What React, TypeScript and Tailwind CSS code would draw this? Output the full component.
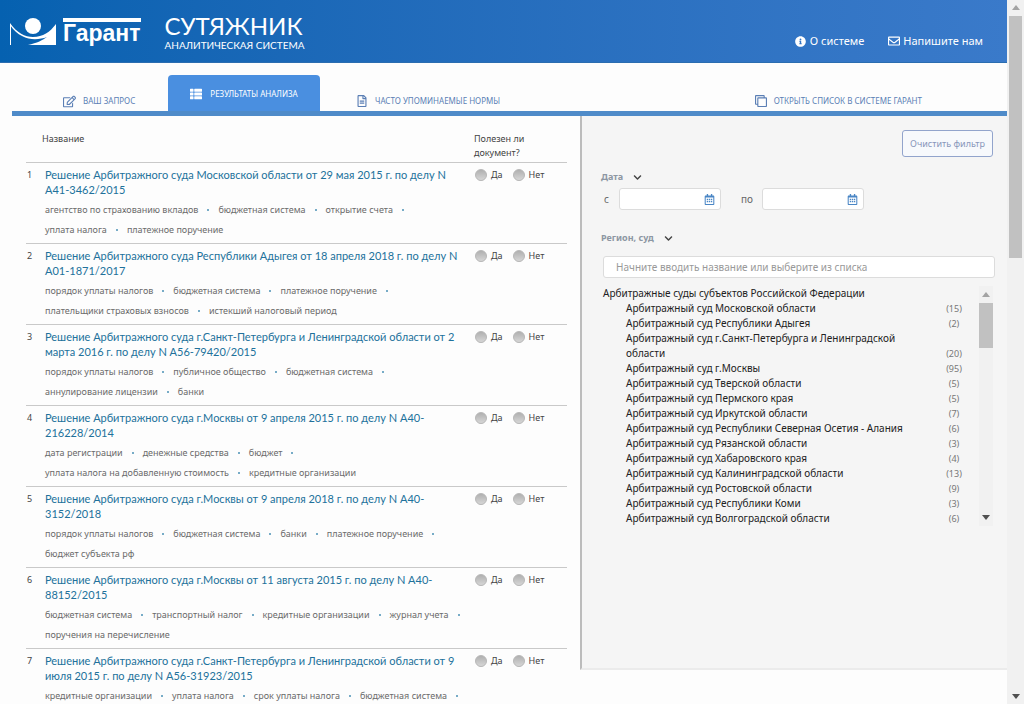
import {
  FaChevronDown,
  FaInfoCircle,
  FaRegCalendarAlt,
  FaRegClone,
  FaRegEdit,
  FaRegEnvelope,
  FaRegFileAlt,
  FaThList,
} from 'react-icons/fa'

type Decision = { title: [string, string]; tags: [string[], string[]] }

const decisions: Decision[] = [
  {
    title: ['Решение Арбитражного суда Московской области от 29 мая 2015 г. по делу N', 'А41-3462/2015'],
    tags: [
      ['агентство по страхованию вкладов', 'бюджетная система', 'открытие счета'],
      ['уплата налога', 'платежное поручение'],
    ],
  },
  {
    title: ['Решение Арбитражного суда Республики Адыгея от 18 апреля 2018 г. по делу N', 'А01-1871/2017'],
    tags: [
      ['порядок уплаты налогов', 'бюджетная система', 'платежное поручение'],
      ['плательщики страховых взносов', 'истекший налоговый период'],
    ],
  },
  {
    title: ['Решение Арбитражного суда г.Санкт-Петербурга и Ленинградской области от 2', 'марта 2016 г. по делу N А56-79420/2015'],
    tags: [
      ['порядок уплаты налогов', 'публичное общество', 'бюджетная система'],
      ['аннулирование лицензии', 'банки'],
    ],
  },
  {
    title: ['Решение Арбитражного суда г.Москвы от 9 апреля 2015 г. по делу N А40-', '216228/2014'],
    tags: [
      ['дата регистрации', 'денежные средства', 'бюджет'],
      ['уплата налога на добавленную стоимость', 'кредитные организации'],
    ],
  },
  {
    title: ['Решение Арбитражного суда г.Москвы от 9 апреля 2018 г. по делу N А40-', '3152/2018'],
    tags: [
      ['порядок уплаты налогов', 'бюджетная система', 'банки', 'платежное поручение'],
      ['бюджет субъекта рф'],
    ],
  },
  {
    title: ['Решение Арбитражного суда г.Москвы от 11 августа 2015 г. по делу N А40-', '88152/2015'],
    tags: [
      ['бюджетная система', 'транспортный налог', 'кредитные организации', 'журнал учета'],
      ['поручения на перечисление'],
    ],
  },
  {
    title: ['Решение Арбитражного суда г.Санкт-Петербурга и Ленинградской области от 9', 'июля 2015 г. по делу N А56-31923/2015'],
    tags: [['кредитные организации', 'уплата налога', 'срок уплаты налога', 'бюджетная система'], []],
  },
]

const courts: [string, number][] = [
  ['Московской области', 15],
  ['Республики Адыгея', 2],
  ['г.Санкт-Петербурга и Ленинградской области', 20],
  ['г.Москвы', 95],
  ['Тверской области', 5],
  ['Пермского края', 5],
  ['Иркутской области', 7],
  ['Республики Северная Осетия - Алания', 6],
  ['Рязанской области', 3],
  ['Хабаровского края', 4],
  ['Калининградской области', 13],
  ['Ростовской области', 9],
  ['Республики Коми', 3],
  ['Волгоградской области', 6],
]

function Arrow({ down, className }: { down?: boolean; className: string }) {
  return (
    <svg viewBox="0 0 8 5" className={`w-2 h-[5px] shrink-0 ${className}`} fill="currentColor" aria-hidden="true">
      <path d={down ? 'M0 0h8L4 5z' : 'M0 5h8L4 0z'} />
    </svg>
  )
}

function GarantMark() {
  return (
    <svg viewBox="0 0 48 30" className="w-12 h-[30px]" fill="#fff" aria-hidden="true">
      <circle cx="24" cy="10" r="8" />
      <path d="M1.5 29V8" stroke="#fff" strokeWidth="1" />
      <path d="M1 7c7 10 15 14 23 14 10 0 17-5 23-13v21H19c9-2 15-5 19-8C27 25 12 25 1 9z" />
    </svg>
  )
}

function Header() {
  return (
    <header className="flex items-center h-[63px] pl-[9px] pr-6 text-white bg-linear-to-r from-[#0561b0] to-[#3a7aca] border-b border-[#2b6db0]">
      <a href="#" className="flex items-center gap-[6px]" aria-label="Гарант">
        <GarantMark />
        <span className="border-t-4 border-white font-['Liberation_Sans'] text-[23px] leading-[22px] font-bold">
          Гарант
        </span>
      </a>
      <div className="ml-6 font-[Lato]">
        <div className="text-[24px] leading-[27px]">СУТЯЖНИК</div>
        <div className="text-[10px] leading-3">АНАЛИТИЧЕСКАЯ СИСТЕМА</div>
      </div>
      <div className="ml-auto mt-5 flex gap-6 text-[11px] leading-4">
        <a href="#" className="flex items-center gap-1">
          <FaInfoCircle />О системе
        </a>
        <a href="#" className="flex items-center gap-[3px]">
          <FaRegEnvelope className="size-3" />
          Напишите нам
        </a>
      </div>
    </header>
  )
}

function Tabs() {
  return (
    <nav className="ml-3 mt-3 flex items-stretch h-[41px] border-b-[5px] border-[#4f8bc9] text-[8px] text-[#5b7fb5]">
      <a href="#" className="flex items-center gap-[7px] w-[156px] pl-[51px] pt-4">
        <FaRegEdit className="size-[13px]" />
        ВАШ ЗАПРОС
      </a>
      <a href="#" className="flex items-center justify-center gap-2 w-[152px] pt-[2px] rounded-t bg-[#4a8fe0] text-white">
        <FaThList className="size-3" />
        РЕЗУЛЬТАТЫ АНАЛИЗА
      </a>
      <a href="#" className="flex items-center gap-[7px] pl-9 pt-4">
        <FaRegFileAlt className="size-3" />
        ЧАСТО УПОМИНАЕМЫЕ НОРМЫ
      </a>
      <a href="#" className="flex items-center gap-[7px] ml-auto pr-[85px] pt-4">
        <FaRegClone className="size-3 -scale-y-100" />
        ОТКРЫТЬ СПИСОК В СИСТЕМЕ ГАРАНТ
      </a>
    </nav>
  )
}

function Vote({ name, label }: { name: string; label: string }) {
  return (
    <label className="flex items-center gap-1">
      <input
        type="radio"
        name={name}
        className="appearance-none size-3 rounded-full bg-linear-to-b from-[#b0b0b0] to-[#d6d6d6] border border-[#b8b8b8]"
      />
      {label}
    </label>
  )
}

function TagLine({ tags, more }: { tags: string[]; more: boolean }) {
  return (
    <div className="flex whitespace-nowrap">
      {tags.map((tag, i) => (
        <span key={tag} className="flex items-center">
          {tag}
          {(more || i < tags.length - 1) && <span className="mx-[9px] size-[2px] rounded-full bg-[#4a90b5]" />}
        </span>
      ))}
    </div>
  )
}

function Results() {
  return (
    <main className="pl-[14px] pr-[13px]">
      <table className="w-full table-fixed border-collapse text-left text-[9px]">
        <colgroup>
          <col className="w-[18px]" />
          <col />
          <col className="w-[93px]" />
        </colgroup>
        <thead className="text-[#444]">
          <tr className="border-b border-[#c9c9c9] align-top leading-[14px]">
            <th colSpan={2} className="pt-4 pl-4 font-normal">Название</th>
            <th className="pt-4 pb-[2px] font-normal">
              Полезен ли
              <br />
              документ?
            </th>
          </tr>
        </thead>
        <tbody>
          {decisions.map((d, i) => (
            <tr key={i} className="border-b border-[#c9c9c9] align-top">
              <td className="pt-1 pl-px leading-[15px] text-[#444]">{i + 1}</td>
              <td className="pt-1 pb-[3px] pl-px">
                <a href="#" className="block whitespace-nowrap font-[Lato] text-[11px] leading-[15px] text-[#21719b]">
                  {d.title[0]}
                  <br />
                  {d.title[1]}
                </a>
                <div className="mt-[3px] leading-5 text-[#6b6b6b]">
                  <TagLine tags={d.tags[0]} more />
                  <TagLine tags={d.tags[1]} more={false} />
                </div>
              </td>
              <td className="pt-1 pl-px">
                <div className="flex gap-[10px] leading-[15px] text-[#444]">
                  <Vote name={`vote-${i}`} label="Да" />
                  <Vote name={`vote-${i}`} label="Нет" />
                </div>
              </td>
            </tr>
          ))}
        </tbody>
      </table>
    </main>
  )
}

function DateField({ label }: { label: string }) {
  return (
    <label className="flex items-center justify-between">
      {label}
      <span className="flex items-center w-[102px] h-[22px] pr-[5px] rounded-[3px] border border-[#dcdcdc] bg-white">
        <input type="text" className="min-w-0 flex-1 px-2 outline-none" />
        <FaRegCalendarAlt className="size-[11px] text-[#4a86c5]" />
      </span>
    </label>
  )
}

function Filter() {
  return (
    <aside className="flex flex-col self-start h-[554px] pl-[19px] pr-3 text-[10px] bg-[#f5f5f5] border-l-2 border-l-[#bcbcbc] border-b-2 border-b-[#ebebeb]">
      <button className="self-end mt-[14px] mr-[2px] w-[91px] h-[27px] rounded-[3px] border border-[#92a4cc] bg-[#f7f9fc] text-[9px] text-[#8796ba]">
        Очистить фильтр
      </button>
      <button className="mt-[12px] flex items-center gap-[10px] self-start text-[9px] leading-4 font-bold text-[#8d97a3]">
        Дата <FaChevronDown className="text-[#444]" />
      </button>
      <div className="mt-[3px] pl-[3px] flex gap-5 text-[#666]">
        <span className="w-[117px]"><DateField label="с" /></span>
        <span className="w-[123px]"><DateField label="по" /></span>
      </div>
      <button className="mt-5 flex items-center gap-[10px] self-start text-[9px] leading-4 font-bold text-[#8d97a3]">
        Регион, суд <FaChevronDown className="text-[#444]" />
      </button>
      <input
        type="text"
        aria-label="Регион, суд"
        placeholder="Начните вводить название или выберите из списка"
        className="mt-[10px] ml-[2px] h-[22px] px-3 rounded-[3px] border border-[#dcdcdc] bg-white text-[10px] outline-none placeholder:text-[#999]"
      />
      <div className="mt-2 ml-[2px] mr-[2px] flex leading-[15px] text-[#222]">
        <div className="flex-1">
          <div>Арбитражные суды субъектов Российской Федерации</div>
          <ul className="pl-[23px] pr-[30px]">
            {courts.map(([name, count]) => (
              <li key={name} className="flex items-end justify-between">
                <span className="max-w-[285px]">{`Арбитражный суд ${name}`}</span>
                <span className="w-5 -mr-[15px] text-center text-[9px] text-[#777]">{`(${count})`}</span>
              </li>
            ))}
          </ul>
        </div>
        <div className="flex flex-col items-center w-[14px] py-[6px] bg-[#f1f1f1]">
          <Arrow className="text-[#a3a3a3]" />
          <div className="mt-[6px] w-full h-[45px] bg-[#c1c1c1]" />
          <Arrow down className="mt-auto text-[#505050]" />
        </div>
      </div>
    </aside>
  )
}

export default function App() {
  return (
    <div className="flex h-screen overflow-hidden bg-[#fdfdfd] font-['Noto_Sans',sans-serif]">
      <div className="flex-1 min-w-0">
        <Header />
        <Tabs />
        <div className="ml-3 grid grid-cols-[568fr_427fr]">
          <Results />
          <Filter />
        </div>
      </div>
      <div className="flex flex-col items-center w-[17px] py-[5px] bg-[#f1f1f1]">
        <Arrow className="text-[#a3a3a3]" />
        <div className="mt-[6px] w-[13px] h-[242px] bg-[#c1c1c1]" />
        <Arrow down className="mt-auto text-[#505050]" />
      </div>
    </div>
  )
}
